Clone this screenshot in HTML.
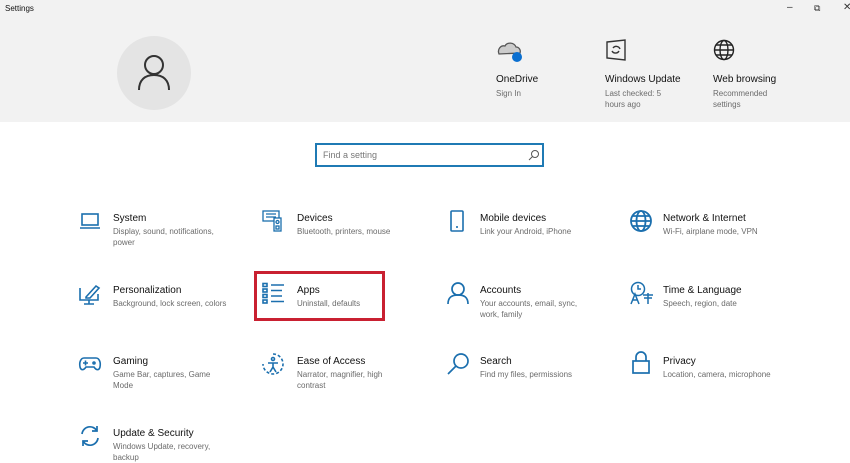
<!DOCTYPE html><html><head><meta charset="utf-8"><style>
body{margin:0;width:850px;height:459px;background:#fff;font-family:"Liberation Sans",sans-serif;position:relative;overflow:hidden}
.hdr{position:absolute;left:0;top:0;width:850px;height:122px;background:#f2f2f2}
.a{position:absolute}
.t{position:absolute;font-size:10px;color:#111}
.s{position:absolute;font-size:8px;color:#6b6b6b;line-height:11px}
svg{position:absolute;fill:none;stroke:#1b6fae;stroke-width:1.6}
</style></head><body>
<div class="hdr"></div>
<div class="t" style="left:5px;top:4px;font-size:8px">Settings</div>
<div class="t" style="left:787px;top:2px;font-size:10px;color:#333">–</div>
<div class="t" style="left:814px;top:3px;font-size:9px;color:#333">⧉</div>
<div class="t" style="left:843px;top:2px;font-size:10px;color:#333">✕</div>
<div class="a" style="left:117px;top:36px;width:74px;height:74px;border-radius:50%;background:#e4e4e4"></div>
<svg style="left:136px;top:54px;stroke:#333;stroke-width:2" width="36" height="38"><circle cx="18" cy="11" r="9"/><path d="M3 36 C3 26 9 21 18 21 C27 21 33 26 33 36"/></svg>
<svg style="left:496px;top:40px;stroke:#555;stroke-width:1.3" width="30" height="24"><path d="M3 14 C1 9 5 5 9 6 C11 2 18 2 20 7 C23 7 25 10 24 13 Z" fill="#ccc"/><circle cx="21" cy="17" r="5" fill="#0a6fd0" stroke="none"/></svg>
<div class="t" style="left:496px;top:74px">OneDrive</div><div class="s" style="left:496px;top:88px">Sign In</div>
<svg style="left:605px;top:39px;stroke:#333;stroke-width:1.4" width="22" height="22"><path d="M2 3 L20 1 L20 21 L2 19 Z"/><path d="M8 9 A4 4 0 0 1 15 10 M14 12 A4 4 0 0 1 7 12"/></svg>
<div class="t" style="left:605px;top:74px">Windows Update</div><div class="s" style="left:605px;top:88px">Last checked: 5<br>hours ago</div>
<svg style="left:713px;top:39px;stroke:#222;stroke-width:1.4" width="22" height="22"><circle cx="11" cy="11" r="9.5"/><ellipse cx="11" cy="11" rx="4" ry="9.5"/><path d="M1.5 11H20.5M3 6H19M3 16H19"/></svg>
<div class="t" style="left:713px;top:74px">Web browsing</div><div class="s" style="left:713px;top:88px">Recommended<br>settings</div>
<div class="a" style="left:315px;top:143px;width:225px;height:20px;border:2px solid #1f7ab4;background:#fff"></div>
<div class="s" style="left:323px;top:150px;font-size:9px;color:#777">Find a setting</div>
<svg style="left:528px;top:149px;stroke:#555;stroke-width:1" width="12" height="12"><circle cx="7" cy="5" r="3.5"/><path d="M4.5 7.5L1 11"/></svg>

<svg style="left:79px;top:211px" width="22" height="20"><rect x="3" y="3" width="16" height="11"/><path d="M1 17H21"/></svg>
<div class="t" style="left:113px;top:213px">System</div><div class="s" style="left:113px;top:226px">Display, sound, notifications,<br>power</div>
<svg style="left:262px;top:209px;stroke-width:1.3" width="22" height="24"><rect x="1" y="2" width="16" height="10"/><path d="M4 5h10M4 8h10"/><rect x="12" y="9" width="7" height="13" fill="#fff"/><circle cx="15.5" cy="13" r="1.5"/><rect x="14" y="17" width="3" height="3"/></svg>
<div class="t" style="left:297px;top:213px">Devices</div><div class="s" style="left:297px;top:226px">Bluetooth, printers, mouse</div>
<svg style="left:449px;top:209px" width="16" height="24"><rect x="2" y="2" width="12" height="20" rx="1"/><path d="M7 18h2"/></svg>
<div class="t" style="left:480px;top:213px">Mobile devices</div><div class="s" style="left:480px;top:226px">Link your Android, iPhone</div>
<svg style="left:629px;top:209px;stroke-width:1.8" width="24" height="24"><circle cx="12" cy="12" r="10"/><ellipse cx="12" cy="12" rx="4.5" ry="10"/><path d="M2 12H22M4 7H20M4 17H20"/></svg>
<div class="t" style="left:663px;top:213px">Network &amp; Internet</div><div class="s" style="left:663px;top:226px">Wi-Fi, airplane mode, VPN</div>

<svg style="left:78px;top:283px" width="24" height="22"><path d="M2 5V17H20V11M2 17M11 17V21M6 21H16"/><path d="M8 14 L18 3 L21 5 L12 15 L8 15 Z"/></svg>
<div class="t" style="left:113px;top:285px">Personalization</div><div class="s" style="left:113px;top:298px">Background, lock screen, colors</div>
<svg style="left:262px;top:282px;stroke-width:1.6" width="24" height="22"><rect x="1" y="1.5" width="4" height="3"/><rect x="1" y="7" width="4" height="3"/><rect x="1" y="12.5" width="4" height="3"/><rect x="1" y="18" width="4" height="3"/><path d="M9 3H22M9 8.5H20M9 14H20M9 19.5H22"/></svg>
<div class="t" style="left:297px;top:285px">Apps</div><div class="s" style="left:297px;top:298px">Uninstall, defaults</div>
<div class="a" style="left:254px;top:271px;width:125px;height:44px;border:3px solid #c92031"></div>
<svg style="left:447px;top:281px;stroke-width:1.7" width="22" height="24"><circle cx="11" cy="8" r="6"/><path d="M1 23C1 16 5 14 11 14C17 14 21 16 21 23"/></svg>
<div class="t" style="left:480px;top:285px">Accounts</div><div class="s" style="left:480px;top:298px">Your accounts, email, sync,<br>work, family</div>
<svg style="left:629px;top:281px;stroke-width:1.5" width="26" height="24"><circle cx="9" cy="8" r="6.5"/><path d="M9 4V8H12"/><path d="M2 23L6 13L10 23M3.5 19H8.5" /><path d="M14 14H24M19 12V23M15 17H23"/></svg>
<div class="t" style="left:663px;top:285px">Time &amp; Language</div><div class="s" style="left:663px;top:298px">Speech, region, date</div>

<svg style="left:78px;top:354px" width="24" height="20"><path d="M6 4H18C21 4 23 8 22 13C21 17 18 16 16 13H8C6 16 3 17 2 13C1 8 3 4 6 4Z"/><path d="M5 9H10M7.5 6.5V11.5"/><circle cx="16" cy="9" r="1"/></svg>
<div class="t" style="left:113px;top:356px">Gaming</div><div class="s" style="left:113px;top:369px">Game Bar, captures, Game<br>Mode</div>
<svg style="left:261px;top:352px" width="24" height="24"><path d="M12 2A10 10 0 1 1 2 12" stroke-dasharray="3 2"/><circle cx="12" cy="7" r="1.5"/><path d="M7 11H17M12 11V15L9 20M12 15L15 20"/></svg>
<div class="t" style="left:297px;top:356px">Ease of Access</div><div class="s" style="left:297px;top:369px">Narrator, magnifier, high<br>contrast</div>
<svg style="left:446px;top:352px;stroke-width:1.7" width="24" height="24"><circle cx="15" cy="9" r="7"/><path d="M10 14L2 22"/></svg>
<div class="t" style="left:480px;top:356px">Search</div><div class="s" style="left:480px;top:369px">Find my files, permissions</div>
<svg style="left:631px;top:351px;stroke-width:1.7" width="20" height="24"><path d="M5 10V6A5 5 0 0 1 15 6V10"/><rect x="2" y="10" width="16" height="12"/></svg>
<div class="t" style="left:663px;top:356px">Privacy</div><div class="s" style="left:663px;top:369px">Location, camera, microphone</div>

<svg style="left:78px;top:424px;stroke-width:1.7" width="24" height="24"><path d="M4 10A8 8 0 0 1 19 7M20 14A8 8 0 0 1 5 17"/><path d="M19 2V7H14M5 22V17H10"/></svg>
<div class="t" style="left:113px;top:428px">Update &amp; Security</div><div class="s" style="left:113px;top:441px">Windows Update, recovery,<br>backup</div>
</body></html>
